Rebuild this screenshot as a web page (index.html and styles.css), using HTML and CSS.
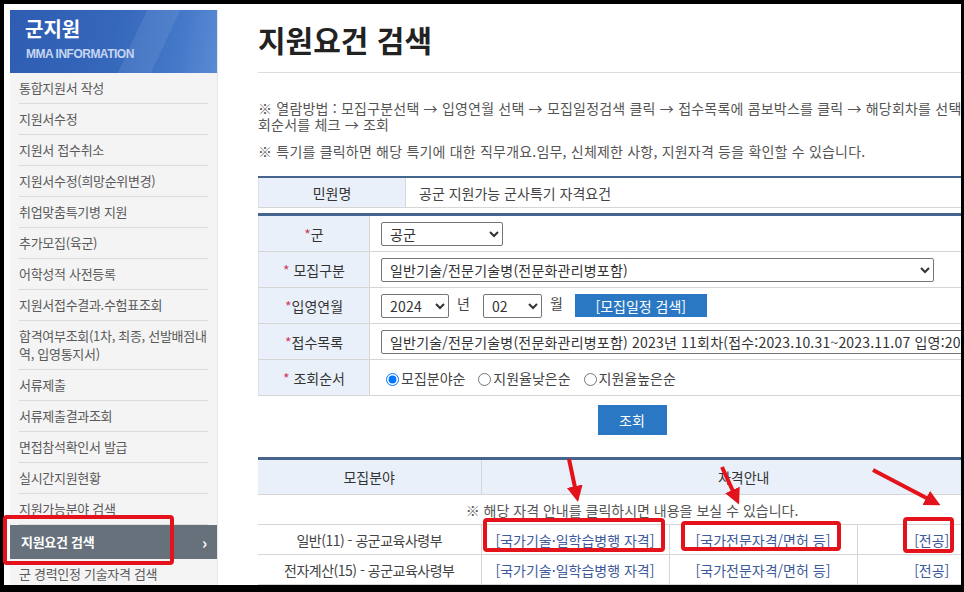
FILE: index.html
```html
<!DOCTYPE html>
<html lang="ko">
<head>
    <meta charset="UTF-8">
    <title>지원요건 검색 - 군지원</title>
    <link rel="stylesheet" href="styles.css">
</head>
<body>

    <div class="screen">
        <aside class="side">
            <div class="side_head">
                <h2>군지원</h2>
                <p>MMA INFORMATION</p>
            </div>
            <ul class="side_menu">
                <li>통합지원서 작성</li>
                <li>지원서수정</li>
                <li>지원서 접수취소</li>
                <li>지원서수정(희망순위변경)</li>
                <li>취업맞춤특기병 지원</li>
                <li>추가모집(육군)</li>
                <li>어학성적 사전등록</li>
                <li>지원서접수결과.수험표조회</li>
                <li>합격여부조회(1차, 최종, 선발배점내역, 입영통지서)</li>
                <li>서류제출</li>
                <li>서류제출결과조회</li>
                <li>면접참석확인서 발급</li>
                <li>실시간지원현황</li>
                <li>지원가능분야 검색</li>
                <li class="on">지원요건 검색<span class="arr">›</span></li>
                <li>군 경력인정 기술자격 검색</li>
            </ul>
        </aside>

        <main class="content">
            <h1 class="page_title">지원요건 검색</h1>

            <p class="note first">※ 열람방법 : 모집구분선택 → 입영연월 선택 → 모집일정검색 클릭 → 접수목록에 콤보박스를 클릭 → 해당회차를 선택 → 조회순서를 체크 → 조회</p>
            <p class="note">※ 특기를 클릭하면 해당 특기에 대한 직무개요.임무, 신체제한 사항, 지원자격 등을 확인할 수 있습니다.</p>

            <table class="tbl tbl_info">
                <tr>
                    <th>민원명</th>
                    <td>공군 지원가능 군사특기 자격요건</td>
                </tr>
            </table>

            <table class="tbl tbl_form">
                <tr>
                    <th><span class="req">*</span>군</th>
                    <td>
                        <select class="sel sel_gun"><option>공군</option></select>
                    </td>
                </tr>
                <tr>
                    <th><span class="req">*</span> 모집구분</th>
                    <td>
                        <select class="sel sel_type"><option>일반기술/전문기술병(전문화관리병포함)</option></select>
                    </td>
                </tr>
                <tr>
                    <th><span class="req">*</span>입영연월</th>
                    <td>
                        <select class="sel sel_year"><option>2024</option></select><span class="unit">년</span><select class="sel sel_month"><option>02</option></select><span class="unit">월</span><button class="btn_blue btn_plan">[모집일정 검색]</button>
                    </td>
                </tr>
                <tr>
                    <th><span class="req">*</span>접수목록</th>
                    <td>
                        <select class="sel sel_list"><option>일반기술/전문기술병(전문화관리병포함) 2023년 11회차(접수:2023.10.31~2023.11.07 입영:2024.02.19)</option></select>
                    </td>
                </tr>
                <tr>
                    <th><span class="req">*</span> 조회순서</th>
                    <td class="radios">
                        <label><input type="radio" name="order" checked>모집분야순</label>
                        <label><input type="radio" name="order">지원율낮은순</label>
                        <label><input type="radio" name="order">지원율높은순</label>
                    </td>
                </tr>
            </table>

            <div class="btn_area">
                <button class="btn_blue btn_search">조회</button>
            </div>

            <table class="tbl tbl_result">
                <colgroup>
                    <col class="c1"><col class="c2"><col class="c3"><col>
                </colgroup>
                <tr>
                    <th>모집분야</th>
                    <th colspan="3">자격안내</th>
                </tr>
                <tr>
                    <td colspan="4" class="guide">※ 해당 자격 안내를 클릭하시면 내용을 보실 수 있습니다.</td>
                </tr>
                <tr>
                    <td class="field">일반(11) - 공군교육사령부</td>
                    <td><a href="#">[국가기술·일학습병행 자격]</a></td>
                    <td><a href="#">[국가전문자격/면허 등]</a></td>
                    <td><a href="#">[전공]</a></td>
                </tr>
                <tr>
                    <td class="field">전자계산(15) - 공군교육사령부</td>
                    <td><a href="#">[국가기술·일학습병행 자격]</a></td>
                    <td><a href="#">[국가전문자격/면허 등]</a></td>
                    <td><a href="#">[전공]</a></td>
                </tr>
            </table>
        </main>
    </div>

    <!-- red annotation marks drawn over the capture -->
    <svg class="marks" width="964" height="592" viewBox="0 0 964 592">
        <defs>
            <marker id="head" markerWidth="18" markerHeight="18" refX="11" refY="8" orient="auto" markerUnits="userSpaceOnUse">
                <path d="M0,0 L16,8 L0,16 Z" fill="#e3121b"/>
            </marker>
        </defs>
        <g fill="none" stroke="#e3121b" stroke-width="4">
            <rect x="5" y="517" width="167" height="46" rx="2"/>
            <rect x="485" y="520" width="178" height="30" rx="2"/>
            <rect x="683" y="523" width="156" height="26" rx="2"/>
            <rect x="905" y="519" width="47" height="32" rx="2"/>
            <line x1="569" y1="459" x2="577" y2="497" marker-end="url(#head)"/>
            <line x1="722" y1="467" x2="737" y2="500" marker-end="url(#head)"/>
            <line x1="873" y1="470" x2="936" y2="503" marker-end="url(#head)"/>
        </g>
    </svg>

</body>
</html>
```

FILE: styles.css
```css
body {
    margin: 0;
    background: #000;
    font-family: "Noto Sans CJK KR", "Noto Sans", sans-serif;
    font-size: 13px;
    color: #555;
}

.screen {
    margin: 4px 0 0 4px;
    width: 957px;
    height: 581px;
    background: #fff;
    overflow: hidden;
    display: flex;
    align-items: flex-start;
}

/* left menu */
.side {
    flex: none;
    width: 207px;
    margin: 6px 0 0 6px;
    min-height: 620px;
    background: #f4f4f4;
    box-shadow: 1px 0 0 #e6e6e6;
}

.side_head {
    height: 63px;
    box-sizing: border-box;
    padding: 6px 15px 0;
    color: #fff;
    background:
        linear-gradient(115deg, rgba(255,255,255,0) 58%, rgba(255,255,255,0.08) 58%, rgba(255,255,255,0.08) 72%, rgba(255,255,255,0) 72%),
        linear-gradient(100deg, #2e5db2 0%, #3567bb 50%, #4478c8 80%, #5a8bd4 100%);
}

.side_head h2 {
    margin: 0;
    font-size: 20px;
    line-height: 26px;
    font-weight: bold;
}

.side_head p {
    margin: 5px 0 0 1px;
    font-family: "Liberation Sans", Arial, sans-serif;
    font-size: 12px;
    line-height: 14px;
    font-weight: bold;
    letter-spacing: -0.5px;
    color: #c6d6f1;
}

.side_menu {
    list-style: none;
    margin: 0;
    padding: 0 9px;
}

.side_menu li {
    padding: 6px 0;
    line-height: 18px;
    border-bottom: 1px solid #dcdcdc;
    letter-spacing: -0.3px;
    color: #5a5a5a;
}

.side_menu li.on {
    margin: 0 -9px;
    padding: 8px 10px 8px 11px;
    display: flex;
    justify-content: space-between;
    background: #67717b;
    color: #fff;
    font-weight: bold;
    border-bottom: 0;
}

.side_menu .arr {
    font-size: 16px;
}

/* main */
.content {
    flex: none;
    width: 748px;
    margin-left: 41px;
    font-size: 14px;
}

.page_title {
    margin: 0;
    padding: 17px 0 15px;
    font-size: 30px;
    line-height: 36px;
    font-weight: bold;
    color: #222;
    border-bottom: 1px solid #dcdcdc;
}

.note {
    margin: 11px 0 0;
    line-height: 16px;
    letter-spacing: 0.2px;
    color: #555;
}

.note.first {
    margin-top: 27px;
}

.tbl {
    width: 100%;
    border-collapse: collapse;
    color: #444;
}

.tbl th {
    font-weight: normal;
    color: #333;
    background: #eaf0f9;
    text-align: center;
}

.tbl_info {
    margin-top: 17px;
    border-top: 2px solid #46658e;
    border-left: 1px solid #dde3ec;
}

.tbl_info th,
.tbl_info td {
    height: 29px;
    padding: 0;
    border-bottom: 1px solid #d6d6d6;
}

.tbl_info th {
    width: 146px;
    border-right: 1px solid #d6d6d6;
}

.tbl_info td {
    padding-left: 13px;
}

.tbl_form {
    margin-top: 5px;
    border-top: 3px solid #46658e;
    border-left: 1px solid #dde3ec;
}

.tbl_form th,
.tbl_form td {
    height: 35px;
    padding: 0;
    border-bottom: 1px solid #d6d6d6;
}

.tbl_form th {
    width: 110px;
    border-right: 1px solid #d6d6d6;
}

.tbl_form td {
    padding-left: 11px;
    white-space: nowrap;
}

.req {
    color: #cc3d5c;
}

.sel {
    height: 24px;
    padding: 0 4px;
    font-family: inherit;
    font-size: 14px;
    letter-spacing: 0.2px;
    color: #333;
    background: #fff;
    border: 1px solid #767676;
    border-radius: 2px;
    vertical-align: middle;
}

.sel_gun { width: 122px; }
.sel_type { width: 553px; }
.sel_year { width: 68px; }
.sel_month { width: 59px; }
.sel_list { width: 620px; }

.unit {
    display: inline-block;
    margin: 0 13px 0 8px;
    vertical-align: middle;
    position: relative;
    top: -3px;
    color: #444;
}

.unit:last-of-type {
    margin-right: 12px;
}

.btn_blue {
    border: 0;
    padding: 0;
    font-family: inherit;
    font-size: 14px;
    color: #fff;
    background: #2a78c3;
    cursor: pointer;
}

.btn_plan {
    width: 132px;
    height: 23px;
    vertical-align: middle;
}

.radios label {
    margin-right: 4px;
    color: #444;
}

.radios input {
    vertical-align: -2px;
    margin: 0 2px 0 5px;
}

.btn_area {
    margin-top: 9px;
    text-align: center;
}

.btn_search {
    width: 69px;
    height: 30px;
}

/* result list */
.tbl_result {
    margin-top: 22px;
    table-layout: fixed;
    border-top: 3px solid #46658e;
}

.tbl_result .c1 { width: 223px; }
.tbl_result .c2 { width: 188px; }
.tbl_result .c3 { width: 188px; }

.tbl_result th {
    height: 34px;
    padding: 0;
    border-bottom: 1px solid #d6d6d6;
}

.tbl_result th + th {
    border-left: 1px solid #d6d6d6;
}

.tbl_result td {
    height: 29px;
    padding: 0;
    text-align: center;
    white-space: nowrap;
    border-bottom: 1px solid #d6d6d6;
}

.tbl_result td + td {
    border-left: 1px solid #d6d6d6;
}

.tbl_result .field {
    letter-spacing: -0.5px;
}

.tbl_result .guide {
    color: #555;
}

.tbl_result a {
    color: #3d5b9a;
    text-decoration: none;
}

.marks {
    position: absolute;
    top: 0;
    left: 0;
    pointer-events: none;
}
```
